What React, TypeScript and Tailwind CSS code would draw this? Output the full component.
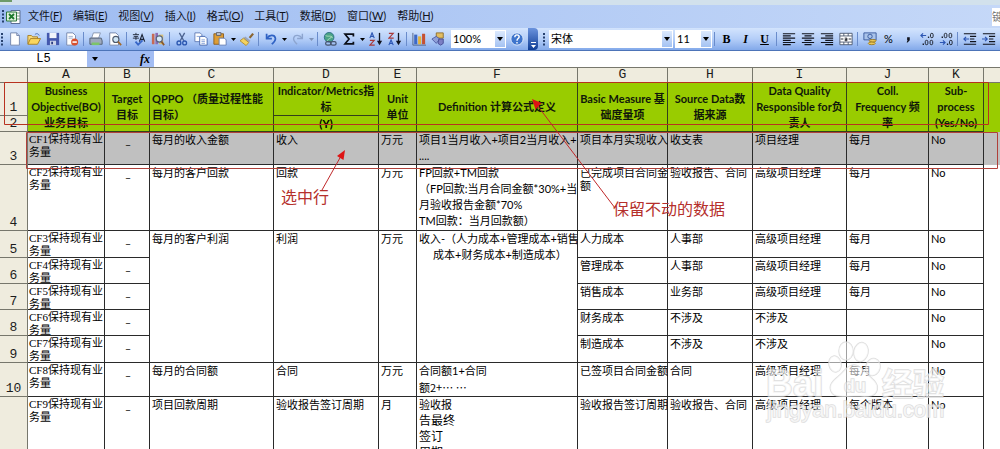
import type { ReactNode } from "react";

const menus = [
  { label: "文件", hotkey: "F" },
  { label: "编辑", hotkey: "E" },
  { label: "视图", hotkey: "V" },
  { label: "插入", hotkey: "I" },
  { label: "格式", hotkey: "O" },
  { label: "工具", hotkey: "T" },
  { label: "数据", hotkey: "D" },
  { label: "窗口", hotkey: "W" },
  { label: "帮助", hotkey: "H" },
];

const columns = [
  { letter: "A", width: "w-[77px]" },
  { letter: "B", width: "w-[45px]" },
  { letter: "C", width: "w-[124px]" },
  { letter: "D", width: "w-[105px]" },
  { letter: "E", width: "w-[38px]" },
  { letter: "F", width: "w-[161px]" },
  { letter: "G", width: "w-[90px]" },
  { letter: "H", width: "w-[85px]" },
  { letter: "I", width: "w-[94px]" },
  { letter: "J", width: "w-[82px]" },
  { letter: "K", width: "w-[55px]" },
];

type Row = {
  num: string;
  height: string;
  name: string;
  // C to F are merged downwards over `span` rows
  merged?: { span: number; qppo: string; metric: string; unit: string; definition: ReactNode };
  measure: string[];
  source: string;
  owner: string;
  freq: string;
  selected?: boolean;
};

const rows: Row[] = [
  {
    num: "3",
    height: "h-[33px]",
    name: "CF1",
    selected: true,
    merged: {
      span: 1,
      qppo: "每月的收入金额",
      metric: "收入",
      unit: "万元",
      definition: (
        <>
          <p>项目1当月收入+项目2当月收入+</p>
          <p>....</p>
        </>
      ),
    },
    measure: ["项目本月实现收入"],
    source: "收支表",
    owner: "项目经理",
    freq: "每月",
  },
  {
    num: "4",
    height: "h-[66px]",
    name: "CF2",
    merged: {
      span: 1,
      qppo: "每月的客户回款",
      metric: "回款",
      unit: "万元",
      definition: (
        <>
          <p>FP回款+TM回款</p>
          <p>（FP回款:当月合同金额*30%+当</p>
          <p>月验收报告金额*70%</p>
          <p>TM回款：当月回款额）</p>
        </>
      ),
    },
    measure: ["已完成项目合同金", "额"],
    source: "验收报告、合同",
    owner: "高级项目经理",
    freq: "每月",
  },
  {
    num: "5",
    height: "h-[27px]",
    name: "CF3",
    merged: {
      span: 5,
      qppo: "每月的客户利润",
      metric: "利润",
      unit: "万元",
      definition: (
        <>
          <p>收入-（人力成本+管理成本+销售</p>
          <p className="pl-3.5">成本+财务成本+制造成本）</p>
        </>
      ),
    },
    measure: ["人力成本"],
    source: "人事部",
    owner: "高级项目经理",
    freq: "每月",
  },
  { num: "6", height: "h-[26px]", name: "CF4", measure: ["管理成本"], source: "人事部", owner: "高级项目经理", freq: "每月" },
  { num: "7", height: "h-[26px]", name: "CF5", measure: ["销售成本"], source: "业务部", owner: "高级项目经理", freq: "每月" },
  { num: "8", height: "h-[26px]", name: "CF6", measure: ["财务成本"], source: "不涉及", owner: "不涉及", freq: "" },
  { num: "9", height: "h-[27px]", name: "CF7", measure: ["制造成本"], source: "不涉及", owner: "不涉及", freq: "" },
  {
    num: "10",
    height: "h-[34px]",
    name: "CF8",
    merged: {
      span: 1,
      qppo: "每月的合同额",
      metric: "合同",
      unit: "万元",
      definition: (
        <>
          <p>合同额1+合同</p>
          <p className="font-['Noto_Sans_CJK_SC',sans-serif]">额2+… …</p>
        </>
      ),
    },
    measure: ["已签项目合同金额"],
    source: "合同",
    owner: "高级项目经理",
    freq: "每月",
  },
  {
    num: "",
    height: "h-[66px]",
    name: "CF9",
    merged: {
      span: 1,
      qppo: "项目回款周期",
      metric: "验收报告签订周期",
      unit: "月",
      definition: (
        <>
          <p>验收报</p>
          <p className="text-xs leading-4">告最终</p>
          <p className="text-xs leading-4">签订</p>
          <p className="text-xs leading-4">周期</p>
        </>
      ),
    },
    measure: ["验收报告签订周期"],
    source: "验收报告、合同",
    owner: "高级项目经理",
    freq: "每个版本",
  },
];

function Tool({ label, children }: { label: string; children: ReactNode }) {
  return (
    <button type="button" aria-label={label} className="flex h-5 w-[19px] shrink-0 items-center justify-center">
      <svg viewBox="0 0 16 16" className="h-3.5 w-3.5" fill="none">
        {children}
      </svg>
    </button>
  );
}

function Caret({ label, dim }: { label: string; dim?: boolean }) {
  return (
    <button type="button" aria-label={label} className="flex h-5 w-2 shrink-0 items-center justify-center">
      <svg viewBox="0 0 5 3" className="h-[3px] w-[5px]">
        <path d="M0 0h5L2.500 3z" fill={dim ? "#7f93b8" : "#000"} />
      </svg>
    </button>
  );
}

function Sep() {
  return <span className="mx-0.5 h-3.5 w-px shrink-0 bg-[#6a8ccb]" />;
}

function Grip() {
  return (
    <svg viewBox="0 0 3 13" className="mx-px h-[13px] w-[3px] shrink-0" fill="#27416f">
      <path d="M0 0h2v2H0zM0 3.500h2v2H0zM0 7h2v2H0zM0 10.500h2v2H0z" />
    </svg>
  );
}

function Combo({ label, value, width }: { label: string; value: string; width: string }) {
  return (
    <span className={`relative flex h-[18px] shrink-0 ${width}`}>
      <select aria-label={label} className="w-full appearance-none bg-white pl-0.5 text-[11px] leading-4 text-black">
        <option>{value}</option>
      </select>
      <span className="pointer-events-none absolute inset-y-px right-px flex w-2.5 items-center justify-center bg-gradient-to-b from-[#dce9fd] to-[#a4c2f2]">
        <svg viewBox="0 0 6 4" className="h-1 w-1.5">
          <path d="M0 0h6L3 4z" fill="#000" />
        </svg>
      </span>
    </span>
  );
}

function MenuBar() {
  return (
    <nav className="flex h-[23px] shrink-0 items-center bg-gradient-to-r from-[#9ebcf1] to-[#c5d8f8] pl-px text-[11px] text-[#10131c]">
      <Grip />
      <svg viewBox="0 0 16 16" className="mr-1.5 h-4 w-4 shrink-0" fill="none">
        <path d="M5 1.500h9v13H5z" fill="#fff" stroke="#5c6f94" />
        <path d="M11 4h3M11 7h3M11 10h3" stroke="#7f9a7f" />
        <path d="M.5 3h10v9H.5z" fill="#dff0dc" stroke="#2f7a3c" />
        <path d="M3 5l5 5M8 5l-5 5" stroke="#1d7a2c" strokeWidth="1.800" />
      </svg>
      <div className="flex gap-[11px]">
        {menus.map((m) => (
          <button type="button" key={m.label} className="whitespace-nowrap">
            {m.label}(<span className="underline">{m.hotkey}</span>)
          </button>
        ))}
      </div>
      <input aria-label="帮助问题" placeholder="键" className="ml-auto h-[18px] w-2 bg-white placeholder:text-[#777]" />
    </nav>
  );
}

function ToolBar() {
  return (
    <div className="flex h-[23px] shrink-0 items-center border-b border-[#4d74b8] bg-gradient-to-b from-[#d3e4fd] via-[#b4cef8] to-[#83a9ea]">
      <Grip />
      <Tool label="新建">
        <path d="M3 1h7l3 3v11H3z" fill="#fff" stroke="#6f81a8" />
        <path d="M10 1v3h3" fill="#cdd9f0" stroke="#6f81a8" />
      </Tool>
      <Tool label="打开">
        <path d="M1 13.500V4h4l1.500 1.500H12V8" fill="#f6d877" stroke="#a47a1f" />
        <path d="M1 14l3-6.500h11.500L12 14z" fill="#fbd65e" stroke="#a47a1f" />
        <path d="M9 3c2-2 4-1 5 1" stroke="#3a62ae" />
      </Tool>
      <Tool label="保存">
        <path d="M1 1h14v14H1z" fill="#4358ae" />
        <path d="M4 1h8v6H4z" fill="#f1f4fb" />
        <path d="M4.500 10h7v5h-7z" fill="#c8d1e8" />
        <path d="M6 11h2v3H6z" fill="#2b3b80" />
      </Tool>
      <Tool label="权限">
        <path d="M2 1h7l3 3v11H2z" fill="#fff" stroke="#6f81a8" />
        <path d="M4 5h5M4 7h5" stroke="#9aa9c9" />
        <circle cx="11" cy="11.500" r="4" fill="#d8502f" />
        <path d="M8.500 11.500h5" stroke="#fff" strokeWidth="1.800" />
      </Tool>
      <Sep />
      <Tool label="打印">
        <path d="M5 1h8l-2 6H3z" fill="#fff" stroke="#8391ac" />
        <path d="M1 7h13l1 3v4H1z" fill="#9daabd" stroke="#4d596d" />
        <path d="M3 12h9v3H3z" fill="#7cc469" />
      </Tool>
      <Tool label="打印预览">
        <path d="M2 1h7l3 3v11H2z" fill="#fff" stroke="#6f81a8" />
        <circle cx="9" cy="8.500" r="3.500" fill="#cfe6f6" stroke="#4d596d" strokeWidth="1.300" />
        <path d="M11.500 11l3.500 4" stroke="#a3692a" strokeWidth="2" />
      </Tool>
      <Sep />
      <Tool label="拼写检查">
        <path d="M1 3h7M4.500 1v2M2 5h5M4.500 5v4M1 7h7" stroke="#1b2334" />
        <path d="M8.500 11L11.500 3l3 8M9.500 8.500h4" stroke="#1b2334" strokeWidth="1.300" />
        <path d="M4 11l3 3.500 5-5" stroke="#3766c8" strokeWidth="2" />
      </Tool>
      <Tool label="信息检索">
        <path d="M1 2h3v12H1z" fill="#c66a55" />
        <path d="M5 1h3v13H5z" fill="#8c6cb4" />
        <path d="M9 3h5v11H9z" fill="#d9c176" />
        <circle cx="9.500" cy="8" r="3.500" fill="#d8eaf8" stroke="#56637e" strokeWidth="1.300" />
        <path d="M12 11l3 4" stroke="#8d5b29" strokeWidth="2" />
      </Tool>
      <Sep />
      <Tool label="剪切">
        <path d="M5 1l5 9M11 1L6 10" stroke="#4c6390" strokeWidth="1.500" />
        <circle cx="4.500" cy="12.500" r="2.200" stroke="#2a56b0" strokeWidth="1.500" />
        <circle cx="11" cy="12.500" r="2.200" stroke="#2a56b0" strokeWidth="1.500" />
      </Tool>
      <Tool label="复制">
        <path d="M1 1h6l2 2v8H1z" fill="#fff" stroke="#5c78b3" />
        <path d="M6.500 5h6l2.500 2.500V15H6.500z" fill="#fff" stroke="#3d60aa" />
        <path d="M3 5h3M8.500 9h4M8.500 11h4M8.500 13h4" stroke="#7f9dd6" />
      </Tool>
      <Tool label="粘贴">
        <path d="M1 2h11v12H1z" fill="#dd9d35" stroke="#8c5a17" />
        <path d="M4 .5h5V4H4z" fill="#b9bec9" stroke="#5d6270" />
        <path d="M7 7h6l2 2v6H7z" fill="#fff" stroke="#5c78b3" />
      </Tool>
      <Caret label="粘贴选项" />
      <Tool label="格式刷">
        <path d="M10 6l4-5 2 1.500-4 5z" fill="#8b6530" />
        <path d="M6 5l6 5-2 2-6-5z" fill="#9aa4b8" />
        <path d="M4 7l6 5-3 3.500L0 10z" fill="#f3d25f" stroke="#b18b2a" />
      </Tool>
      <Sep />
      <Tool label="撤消">
        <path d="M3 2v5.500h6" stroke="#2f62c4" strokeWidth="2" />
        <path d="M3.500 7C6 3 12 2.500 13 7c.5 3-2 5-4 7" stroke="#2f62c4" strokeWidth="2" />
      </Tool>
      <Caret label="撤消选项" />
      <Tool label="恢复">
        <path d="M13 2v5.500H7" stroke="#8da5cf" strokeWidth="1.600" />
        <path d="M12.500 7C10 3 4 2.500 3 7c-.5 3 2 5 4 7" stroke="#8da5cf" strokeWidth="1.600" />
      </Tool>
      <Caret label="恢复选项" dim />
      <Sep />
      <Tool label="超链接">
        <circle cx="7" cy="6" r="5.500" fill="#4aa386" stroke="#2a6b84" />
        <path d="M3 4c3 2 6-1 8 3M5 10c1-3 4-2 5-5" stroke="#b6e2c2" />
        <rect x="3" y="11" width="6" height="4" rx="2" stroke="#45536c" strokeWidth="1.400" />
        <rect x="9" y="11" width="6" height="4" rx="2" stroke="#45536c" strokeWidth="1.400" />
      </Tool>
      <Tool label="自动求和">
        <path d="M13 5V2.500H3.500L8 8l-4.500 5.500H13V11" stroke="#0b0f18" strokeWidth="2" />
      </Tool>
      <Caret label="求和选项" />
      <Tool label="升序排序">
        <path d="M1 7l2.500-6L6 7M2 5h3" stroke="#2c56b4" strokeWidth="1.300" />
        <path d="M1 9.500h5L1 15h5.500" stroke="#a93a3a" strokeWidth="1.300" />
        <path d="M12 1v11" stroke="#10131c" strokeWidth="1.500" />
        <path d="M9 10h6l-3 5z" fill="#10131c" />
      </Tool>
      <Tool label="降序排序">
        <path d="M1 1.500h5L1 7h5.500" stroke="#a93a3a" strokeWidth="1.300" />
        <path d="M1 15l2.500-6L6 15M2 13h3" stroke="#2c56b4" strokeWidth="1.300" />
        <path d="M12 1v11" stroke="#10131c" strokeWidth="1.500" />
        <path d="M9 10h6l-3 5z" fill="#10131c" />
      </Tool>
      <Sep />
      <Tool label="图表向导">
        <path d="M1 1v14h15" stroke="#4f5f80" />
        <path d="M2.500 3h3.500v11H2.500z" fill="#3f69c4" />
        <path d="M7 5h3.500v9H7z" fill="#e3b33a" />
        <path d="M11.500 2H15v12h-3.500z" fill="#c65133" />
      </Tool>
      <Tool label="绘图">
        <path d="M6 1h8v6H6z" fill="#e1bd62" stroke="#8c6c2a" />
        <path d="M1 8l5-3 4 3-4 5z" fill="#8f9fd8" stroke="#4a5aa2" />
        <path d="M9 8h5v5l-3 2-3-2z" fill="#7c7fc4" stroke="#444a92" />
      </Tool>
      <span className="w-1 shrink-0" />
      <Combo label="显示比例" value="100%" width="w-[55px]" />
      <span className="w-px shrink-0" />
      <Tool label="帮助">
        <circle cx="8" cy="8" r="7" fill="#3f75cc" stroke="#e4eefc" />
        <path d="M5.500 6c0-3.500 5-3.500 5-.5C10.500 7.500 8 7.500 8 10M8 11.500v1.500" stroke="#fff" strokeWidth="1.600" />
      </Tool>
      <button type="button" aria-label="工具栏选项" className="mr-1 ml-0.5 flex h-[22px] w-2.5 shrink-0 items-end justify-center rounded-r bg-gradient-to-b from-[#6b93dd] to-[#0f3d96] pb-0.5">
        <svg viewBox="0 0 6 6" className="h-1.5 w-1.5">
          <path d="M1 0h5v1H1zM1 3h5L3.500 6z" fill="#fff" />
        </svg>
      </button>
      <Grip />
      <span className="w-0.5 shrink-0" />
      <Combo label="字体" value="宋体" width="w-[124px]" />
      <span className="w-0.5 shrink-0" />
      <Combo label="字号" value="11" width="w-[37px]" />
      <Sep />
      <button type="button" className="h-5 w-[19px] shrink-0 font-['Liberation_Serif',serif] text-xs font-black">
        B
      </button>
      <button type="button" className="h-5 w-[19px] shrink-0 font-['Liberation_Serif',serif] text-xs font-bold italic">
        I
      </button>
      <button type="button" className="h-5 w-[19px] shrink-0 font-['Liberation_Serif',serif] text-xs font-bold underline">
        U
      </button>
      <Sep />
      <Tool label="左对齐">
        <path d="M1 2h14M1 4.500h9M1 7h14M1 9.500h9M1 12h14M1 14.500h9" stroke="#10131c" strokeWidth="1.300" />
      </Tool>
      <Tool label="居中">
        <path d="M1 2h14M4 4.500h8M1 7h14M4 9.500h8M1 12h14M4 14.500h8" stroke="#10131c" strokeWidth="1.300" />
      </Tool>
      <Tool label="右对齐">
        <path d="M1 2h14M6 4.500h9M1 7h14M6 9.500h9M1 12h14M6 14.500h9" stroke="#10131c" strokeWidth="1.300" />
      </Tool>
      <Tool label="合并及居中">
        <path d="M1 1.500h14v13H1zM1 4.500h14M1 11.500h14M5.500 1.500v3M10.500 1.500v3M5.500 11.500v3M10.500 11.500v3" fill="#fff" stroke="#47536c" />
        <path d="M2 8h3M11 8h3M6.500 7h2.500v3H7V8.500h2" stroke="#10131c" />
      </Tool>
      <Sep />
      <Tool label="货币样式">
        <path d="M1 1h14v8H1z" fill="#a9c3ea" stroke="#34569a" />
        <circle cx="8" cy="5" r="2.500" stroke="#34569a" />
        <ellipse cx="11" cy="10" rx="4" ry="1.500" fill="#ecc858" stroke="#9c7a22" />
        <ellipse cx="10" cy="13" rx="4" ry="1.500" fill="#ecc858" stroke="#9c7a22" />
      </Tool>
      <button type="button" className="h-5 w-[19px] shrink-0 text-[11px]">
        %
      </button>
      <Tool label="千位分隔样式">
        <path d="M7 6h3v3.500L7.500 12H6.500l1-3H7z" fill="#10131c" />
      </Tool>
      <Tool label="增加小数位数">
        <path d="M1 4h6M3.500 1.500L1 4l2.500 2.500" stroke="#2c56b4" strokeWidth="1.300" />
        <path d="M9 6h1.500" stroke="#10131c" strokeWidth="1.500" />
        <rect x="12" y="1.500" width="3" height="5" rx="1.500" stroke="#10131c" />
        <path d="M3 14h1.500" stroke="#10131c" strokeWidth="1.500" />
        <rect x="6" y="9.500" width="3" height="5" rx="1.500" stroke="#10131c" />
        <rect x="11.500" y="9.500" width="3" height="5" rx="1.500" stroke="#10131c" />
      </Tool>
      <Tool label="减少小数位数">
        <path d="M1 12h6M4.500 9.500L7 12l-2.500 2.500" stroke="#2c56b4" strokeWidth="1.300" />
        <path d="M9 14h1.500" stroke="#10131c" strokeWidth="1.500" />
        <rect x="12" y="9.500" width="3" height="5" rx="1.500" stroke="#10131c" />
        <path d="M3 6h1.500" stroke="#10131c" strokeWidth="1.500" />
        <rect x="6" y="1.500" width="3" height="5" rx="1.500" stroke="#10131c" />
        <rect x="11.500" y="1.500" width="3" height="5" rx="1.500" stroke="#10131c" />
      </Tool>
      <Sep />
      <Tool label="减少缩进量">
        <path d="M1 2h14M8 5h7M8 8h5M8 11h7M1 14h14" stroke="#10131c" strokeWidth="1.400" />
        <path d="M7 8H1M3.500 5.500L1 8l2.500 2.500" stroke="#2c56b4" strokeWidth="1.300" />
      </Tool>
      <Tool label="增加缩进量">
        <path d="M1 2h14M8 5h7M8 8h5M8 11h7M1 14h14" stroke="#10131c" strokeWidth="1.400" />
        <path d="M0 8h6M3.500 5.500L6 8l-2.500 2.500" stroke="#2c56b4" strokeWidth="1.300" />
      </Tool>
    </div>
  );
}

function FormulaBar() {
  return (
    <div className="flex h-4 shrink-0 bg-[#a3bdf3]">
      <input
        aria-label="名称框"
        defaultValue="L5"
        className="w-[87px] bg-white text-center font-['Liberation_Mono',monospace] text-xs"
      />
      <button type="button" aria-label="名称列表" className="flex w-4 items-center justify-center">
        <svg viewBox="0 0 6 4" className="h-1 w-1.5">
          <path d="M0 0h6L3 4z" fill="#000" />
        </svg>
      </button>
      <label htmlFor="formula" className="w-[51px] pr-1 text-right font-['Liberation_Serif',serif] text-xs leading-4 font-bold italic">
        fx
      </label>
      <input id="formula" className="min-w-0 flex-1 bg-white" />
    </div>
  );
}

const gridHead = "border-r border-b border-[#77776c] bg-[#efecde] font-['Liberation_Mono',monospace] text-[13px] font-normal text-[#1c1c1c]";
const title = "overflow-hidden border-r border-b border-[#33401a] bg-[#99cc00] font-bold leading-4 whitespace-nowrap text-[#10180a]";
const line = "border-r border-b border-[#2a2a2a] align-top whitespace-nowrap";
const cell = `${line} pt-px pl-0.5`;

function Sheet() {
  return (
    <table className="w-full table-fixed border-separate border-spacing-0 text-[11px] leading-[13px]">
      <colgroup>
        <col className="w-7" />
        {columns.map((c) => (
          <col key={c.letter} className={c.width} />
        ))}
        <col />
      </colgroup>
      <thead>
        <tr className="h-[15px]">
          <th className={gridHead} />
          {columns.map((c) => (
            <th key={c.letter} scope="col" className={`${gridHead} leading-[14px]`}>
              {c.letter}
            </th>
          ))}
          <th className="border-b border-[#77776c] bg-[#efecde]" />
        </tr>
        <tr className="h-[33px]">
          <th scope="row" className={`${gridHead} align-bottom leading-[14px]`}>1</th>
          <th rowSpan={2} className={title}>
            Business
            <br />
            Objective(BO)
            <br />
            业务目标
          </th>
          <th rowSpan={2} className={title}>
            Target
            <br />
            目标
          </th>
          <th rowSpan={2} className={`${title} pl-0.5 text-left`}>
            QPPO （质量过程性能
            <br />
            目标）
          </th>
          <th className={title}>
            Indicator/Metrics指
            <br />标
          </th>
          <th rowSpan={2} className={title}>
            Unit
            <br />
            单位
          </th>
          <th rowSpan={2} className={title}>
            Definition 计算公式定义
          </th>
          <th rowSpan={2} className={title}>
            Basic Measure 基
            <br />
            础度量项
          </th>
          <th rowSpan={2} className={title}>
            Source Data数
            <br />
            据来源
          </th>
          <th rowSpan={2} className={title}>
            Data Quality
            <br />
            Responsible for负
            <br />
            责人
          </th>
          <th rowSpan={2} className={title}>
            Coll.
            <br />
            Frequency 频
            <br />率
          </th>
          <th rowSpan={2} className={title}>
            Sub-
            <br />
            process
            <br />
            (Yes/No)
          </th>
          <th rowSpan={2} className="bg-[#99cc00]" />
        </tr>
        <tr className="h-4">
          <th scope="row" className={`${gridHead} align-bottom leading-[14px]`}>2</th>
          <th className="border-r border-b border-[#33401a] bg-[#99cc00] leading-[14px]">(Y)</th>
        </tr>
      </thead>
      <tbody>
        {rows.map((r) => (
          <tr key={r.name} className={r.selected ? `${r.height} bg-[#c0c0c0]` : r.height}>
            <th scope="row" className={`${gridHead} align-bottom leading-[14px]`}>
              {r.num}
            </th>
            <td className={`${line} pt-px pl-px font-['Liberation_Serif','Noto_Sans_CJK_SC',serif]`}>
              <div className="max-h-6">
                {r.name}保持现有业
                <br />
                务量
              </div>
            </td>
            <td className={`${cell} text-center`}>_</td>
            {r.merged && (
              <>
                <td rowSpan={r.merged.span} className={cell}>{r.merged.qppo}</td>
                <td rowSpan={r.merged.span} className={cell}>{r.merged.metric}</td>
                <td rowSpan={r.merged.span} className={cell}>{r.merged.unit}</td>
                <td rowSpan={r.merged.span} className={`${line} pl-0.5 leading-4`}>{r.merged.definition}</td>
              </>
            )}
            <td className={cell}>
              {r.measure.map((text) => (
                <p key={text}>{text}</p>
              ))}
            </td>
            <td className={cell}>{r.source}</td>
            <td className={cell}>{r.owner}</td>
            <td className={cell}>{r.freq}</td>
            <td className={cell}>No</td>
            <td />
          </tr>
        ))}
      </tbody>
    </table>
  );
}

// Red boxes, arrows and notes drawn over the grid
function Notes() {
  return (
    <div className="pointer-events-none absolute top-0 left-0 text-base leading-5 whitespace-nowrap text-[#b5302c]">
      <svg width="1000" height="382" viewBox="0 0 1000 382" fill="none">
        <path d="M4.500 14.500H988.500V56.500H4.500z" stroke="#b8321f" />
        <path d="M26.500 64.500H997.500V100.500H26.500z" stroke="#b0403a" />
        <path d="M322 122L341 88" stroke="#c0282a" />
        <path d="M345 82l-1.500 10-6.500-4z" fill="#dd1414" />
        <path d="M615 140L537 37" stroke="#c0282a" />
        <path d="M532 31l9.500 4-6 6.500z" fill="#dd1414" />
      </svg>
      <span className="absolute top-[119px] left-[281px]">选中行</span>
      <span className="absolute top-[131px] left-[613px]">保留不动的数据</span>
    </div>
  );
}

function Watermark() {
  return (
    <svg
      viewBox="0 0 190 84"
      className="pointer-events-none absolute top-[272px] left-[762px] h-[84px] w-[190px] font-['Liberation_Sans','Noto_Sans_CJK_SC',sans-serif] opacity-80"
      fill="#fff"
      fillOpacity="0.7"
      stroke="#d6d6d6"
      strokeWidth="1.500"
      paintOrder="stroke"
    >
      <ellipse cx="73" cy="24" rx="6" ry="8" transform="rotate(-12 73 24)" />
      <ellipse cx="84" cy="11" rx="7" ry="9" />
      <ellipse cx="99" cy="12" rx="7" ry="9.500" transform="rotate(12 99 12)" />
      <ellipse cx="111" cy="27" rx="7" ry="8.500" transform="rotate(15 111 27)" />
      <path d="M92 25c6 0 9 5 13 9 5 5 12 9 10 16-2 8-10 6-23 6s-20 2-23-5c-3-8 5-12 10-17 4-4 7-9 13-9z" />
      <text x="4" y="56" fontSize="37" fontWeight="700">
        Bai
      </text>
      <text x="82" y="52" fontSize="18" fontWeight="700">
        du
      </text>
      <text x="120" y="55" fontSize="31" fontWeight="700">
        经验
      </text>
      <text x="5" y="77" fontSize="22">
        jingyan.baidu.com
      </text>
    </svg>
  );
}

export default function App() {
  return (
    <div className="flex h-screen flex-col overflow-hidden bg-white font-['Lato','Noto_Sans_CJK_SC',sans-serif] text-black">
      <div className="h-[5px] shrink-0 bg-[#d2e1ec]">
        <div className="h-0.5 w-3 bg-[#6d9a6a]" />
      </div>
      <MenuBar />
      <ToolBar />
      <FormulaBar />
      <main className="relative min-h-0 flex-1 border-t border-[#77776c]">
        <Sheet />
        <Notes />
        <Watermark />
      </main>
    </div>
  );
}
